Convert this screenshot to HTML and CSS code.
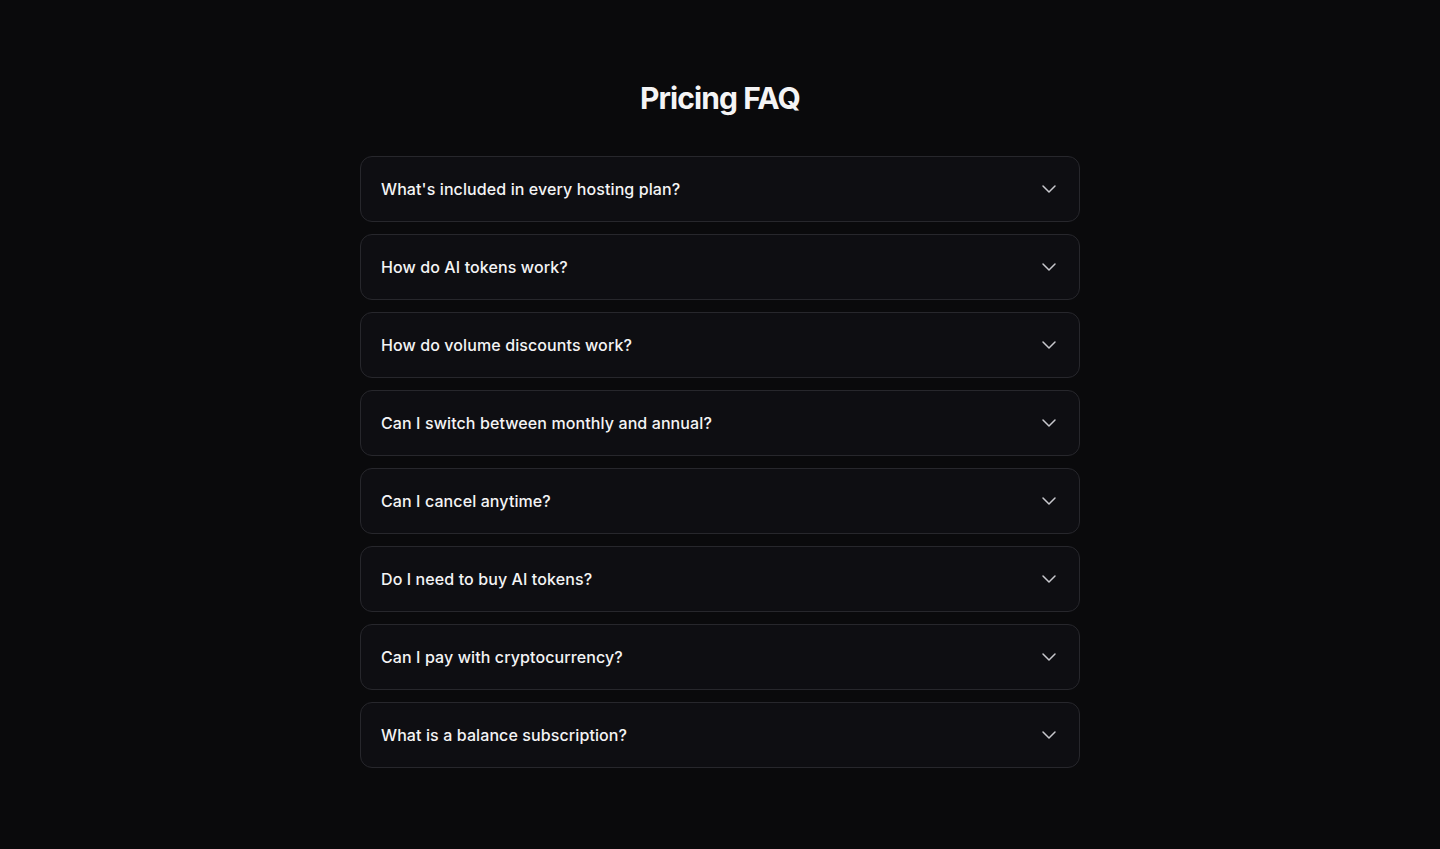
FILE: index.html
```html
<!DOCTYPE html>
<html lang="en">
<head>
  <meta charset="UTF-8" />
  <meta name="viewport" content="width=device-width, initial-scale=1.0" />
  <title>Pricing FAQ</title>
  <link rel="stylesheet" href="styles.css">
</head>
<body>
  <section class="faq">
    <h2>Pricing FAQ</h2>
    <div class="faq-list">
      <button class="faq-item"><span>What's included in every hosting plan?</span><svg viewBox="0 0 24 24"><path d="M6 9l6 6 6-6"/></svg></button>
      <button class="faq-item"><span>How do AI tokens work?</span><svg viewBox="0 0 24 24"><path d="M6 9l6 6 6-6"/></svg></button>
      <button class="faq-item"><span>How do volume discounts work?</span><svg viewBox="0 0 24 24"><path d="M6 9l6 6 6-6"/></svg></button>
      <button class="faq-item"><span>Can I switch between monthly and annual?</span><svg viewBox="0 0 24 24"><path d="M6 9l6 6 6-6"/></svg></button>
      <button class="faq-item"><span>Can I cancel anytime?</span><svg viewBox="0 0 24 24"><path d="M6 9l6 6 6-6"/></svg></button>
      <button class="faq-item"><span>Do I need to buy AI tokens?</span><svg viewBox="0 0 24 24"><path d="M6 9l6 6 6-6"/></svg></button>
      <button class="faq-item"><span>Can I pay with cryptocurrency?</span><svg viewBox="0 0 24 24"><path d="M6 9l6 6 6-6"/></svg></button>
      <button class="faq-item"><span>What is a balance subscription?</span><svg viewBox="0 0 24 24"><path d="M6 9l6 6 6-6"/></svg></button>
    </div>
  </section>
</body>
</html>
```

FILE: styles.css
```css
body {
  font-family: Inter, "Noto Sans", sans-serif;
  margin: 0;
  padding: 0;
  background-color: #0a0a0c;
  color: #f4f4f5;
}
.faq {
  width: 720px;
  margin: 0 auto;
  padding: 80px 0;
}
.faq h2 {
  margin: 0 0 40px;
  text-align: center;
  font-size: 30px;
  line-height: 36px;
  font-weight: 700;
  letter-spacing: -0.9px;
}
.faq-list {
  display: flex;
  flex-direction: column;
  gap: 12px;
}
.faq-item {
  display: flex;
  align-items: center;
  justify-content: space-between;
  width: 100%;
  padding: 20px 18px 20px 20px;
  background: #0e0e12;
  border: 1px solid #27272c;
  border-radius: 12px;
  color: #f4f4f5;
  font-family: inherit;
  font-size: 16px;
  line-height: 24px;
  font-weight: 500;
  letter-spacing: 0.1px;
  text-align: left;
  cursor: pointer;
}
.faq-item svg {
  width: 24px;
  height: 24px;
  margin: -4px 0;
  fill: none;
  stroke: #c8c8cd;
  stroke-width: 1.5;
  stroke-linecap: round;
  stroke-linejoin: round;
}
```
